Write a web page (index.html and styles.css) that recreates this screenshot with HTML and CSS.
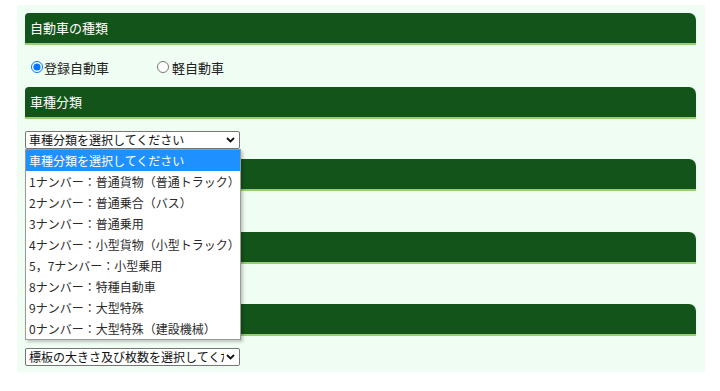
FILE: index.html
```html
<!DOCTYPE html>
<html lang="ja">
<head>
<meta charset="utf-8">
<title>自動車の種類</title>
<link rel="stylesheet" href="styles.css">
</head>
<body>
<div class="page">
  <div class="panel">
    <div class="hdr">自動車の種類</div>
    <div class="content radios">
      <label class="radio"><input type="radio" name="kind" checked><span>登録自動車</span></label>
      <label class="radio second"><input type="radio" name="kind"><span>軽自動車</span></label>
    </div>

    <div class="hdr">車種分類</div>
    <div class="content c2">
      <div class="select"><span class="sel-text">車種分類を選択してください</span><svg class="chev" width="9" height="6" viewBox="0 0 9 6"><path d="M1 1 L4.5 4.5 L8 1" fill="none" stroke="#111" stroke-width="1.8"/></svg></div>
    </div>

    <div class="hdr"></div>
    <div class="content c3"></div>

    <div class="hdr"></div>
    <div class="content c4"></div>

    <div class="hdr"></div>
    <div class="content c5">
      <div class="select"><span class="sel-text">標板の大きさ及び枚数を選択してください</span><svg class="chev" width="9" height="6" viewBox="0 0 9 6"><path d="M1 1 L4.5 4.5 L8 1" fill="none" stroke="#111" stroke-width="1.8"/></svg></div>
    </div>

    <ul class="dropdown">
      <li class="active">車種分類を選択してください</li>
      <li>1ナンバー：普通貨物（普通トラック）</li>
      <li>2ナンバー：普通乗合（バス）</li>
      <li>3ナンバー：普通乗用</li>
      <li>4ナンバー：小型貨物（小型トラック）</li>
      <li>5，7ナンバー：小型乗用</li>
      <li>8ナンバー：特種自動車</li>
      <li>9ナンバー：大型特殊</li>
      <li>0ナンバー：大型特殊（建設機械）</li>
    </ul>
  </div>
</div>
</body>
</html>
```
FILE: styles.css
```css
html, body {
  margin: 0;
  padding: 0;
  background: #ffffff;
}
body {
  font-family: "Noto Sans CJK JP", "Noto Sans", sans-serif;
  color: #222;
}
.page {
  padding: 5px 0 0 17px;
}
.panel {
  position: relative;
  box-sizing: border-box;
  width: 688px;
  height: 367px;
  background: #effdf2;
  padding: 8px 9px 0 8px;
}
.hdr {
  box-sizing: content-box;
  height: 30px;
  line-height: 29px;
  background: #13541a;
  border-bottom: 2px solid #95cf6f;
  border-radius: 4px 7px 0 0;
  color: #ffffff;
  font-size: 13px;
  padding-left: 5px;
  white-space: nowrap;
  overflow: hidden;
}
.content {
  box-sizing: border-box;
}
.radios {
  height: 42px;
  padding-top: 2px;
  display: flex;
  align-items: center;
  font-size: 13px;
  color: #222;
}
.radio {
  display: flex;
  align-items: center;
}
.radio input {
  width: 12px;
  height: 12px;
  margin: 0 1px 0 6px;
}
.radio.second {
  margin-left: 42px;
}
.radio.second input {
  margin-right: 3px;
}
.c2 { height: 40px; padding-top: 12px; }
.c3 { height: 41px; padding-top: 12px; }
.c4 { height: 40px; padding-top: 12px; }
.c5 { height: 36px; padding-top: 12px; }
.select {
  box-sizing: border-box;
  width: 215px;
  height: 18px;
  border: 1px solid #767676;
  border-radius: 2px;
  background: #ffffff;
  display: flex;
  align-items: center;
  padding: 0 4px 0 3px;
  font-size: 12px;
  line-height: 16px;
  color: #111;
}
.sel-text {
  flex: 1;
  overflow: hidden;
  white-space: nowrap;
}
.chev {
  flex: none;
  margin-left: 2px;
}
.dropdown {
  position: absolute;
  left: 8px;
  top: 144px;
  width: 216px;
  box-sizing: border-box;
  margin: 0;
  padding: 0;
  list-style: none;
  background: #ffffff;
  border: 1px solid #9a9a9a;
  box-shadow: 2px 2px 3px rgba(0, 0, 0, 0.22);
  font-size: 12px;
  color: #2a2a2a;
}
.dropdown li {
  height: 21px;
  line-height: 21px;
  padding-left: 3px;
  white-space: nowrap;
  overflow: hidden;
}
.dropdown li.active {
  background: #1e90ff;
  color: #ffffff;
}
```
